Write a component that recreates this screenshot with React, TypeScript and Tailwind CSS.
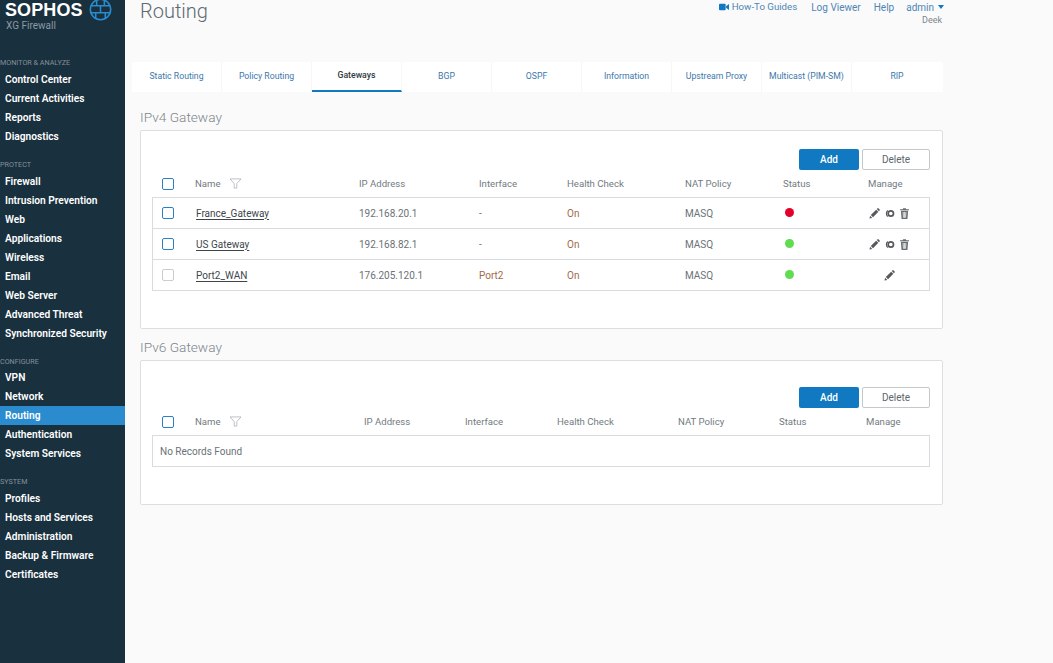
import { Fragment, type ReactNode } from "react";

const nav = [
  { label: "MONITOR & ANALYZE", items: ["Control Center", "Current Activities", "Reports", "Diagnostics"] },
  { label: "PROTECT", items: ["Firewall", "Intrusion Prevention", "Web", "Applications", "Wireless", "Email", "Web Server", "Advanced Threat", "Synchronized Security"] },
  { label: "CONFIGURE", items: ["VPN", "Network", "Routing", "Authentication", "System Services"] },
  { label: "SYSTEM", items: ["Profiles", "Hosts and Services", "Administration", "Backup & Firmware", "Certificates"] },
];

const tabs = ["Static Routing", "Policy Routing", "Gateways", "BGP", "OSPF", "Information", "Upstream Proxy", "Multicast (PIM-SM)", "RIP"];

const gateways = [
  { name: "France_Gateway", ip: "192.168.20.1", iface: "-", status: "bg-[#e4002b]", full: true, dim: false },
  { name: "US Gateway", ip: "192.168.82.1", iface: "-", status: "bg-[#5fdc4f]", full: true, dim: false },
  { name: "Port2_WAN", ip: "176.205.120.1", iface: "Port2", status: "bg-[#5fdc4f]", full: false, dim: true },
];

const v4Cols = "grid-cols-[43px_164px_120px_88px_118px_98px_85px_62px]";
const v4RowCols = "grid-cols-[42px_164px_120px_88px_118px_98px_85px_62px]";
const v6Cols = "grid-cols-[43px_169px_101px_92px_121px_101px_87px_60px]";

function Logo() {
  return (
    <div className="h-[54px] pl-[5px] overflow-hidden">
      <div className="flex items-start">
        <span className="font-['Liberation_Sans',sans-serif] text-[18px] leading-[20px] font-bold tracking-[0.1px] text-white">SOPHOS</span>
        <svg viewBox="0 0 24 24" className="w-[23px] h-[23px] ml-[6px] mt-[-2px]" fill="none" stroke="#2a8ccf" strokeWidth="1.6">
          <circle cx="12" cy="12" r="10.6" />
          <path d="M2 8h20M1.5 15.5h21M8 1.8v6.2M16 1.8v6.2M12 8v7.5M7 15.5v6.5M17 15.5v6.5" />
        </svg>
      </div>
      <div className="text-[10px] leading-[13px] text-[#8d9aa3] -mt-[2px] pl-[1px]">XG Firewall</div>
    </div>
  );
}

function Sidebar() {
  return (
    <aside className="w-[125px] shrink-0 bg-[#19303e] overflow-hidden">
      <Logo />
      {nav.map((group, i) => (
        <Fragment key={group.label}>
          <div className={`${i === 0 ? "mt-0" : "mt-[10px]"} ${i === 2 ? "h-[15px]" : "h-[16px]"} leading-[18px] text-[7.2px] text-[#84919a] whitespace-nowrap`}>
            {group.label}
          </div>
          {group.items.map((item) => (
            <div
              key={item}
              className={`h-[19px] pl-[5px] leading-[19px] text-[10.2px] font-semibold whitespace-nowrap text-white ${item === "Routing" ? "bg-[#2a8ccf]" : ""}`}
            >
              {item}
            </div>
          ))}
        </Fragment>
      ))}
    </aside>
  );
}

function TopBar() {
  return (
    <div className="h-[62px] flex justify-between pl-[15px] pr-[109px]">
      <h1 className="text-[20px] leading-[22px] font-light text-[#5d6a73]">Routing</h1>
      <div className="flex flex-col items-end">
        <div className="flex items-center h-[14px] text-[10px] text-[#4f86b5]">
          <svg viewBox="0 0 12 9" className="w-[10px] h-[8px] mr-[3px]" fill="#1079c1">
            <rect x="0" y="0.5" width="8" height="8" rx="1.2" />
            <path d="M8.5 3.5 12 1v7L8.5 5.5z" />
          </svg>
          <span className="text-[9.7px]">How-To Guides</span>
          <span className="ml-[14px]">Log Viewer</span>
          <span className="ml-[13px]">Help</span>
          <span className="ml-[12px]">admin</span>
          <span className="ml-[4px] mb-[1px] border-x-[3.5px] border-x-transparent border-t-[4px] border-t-[#1079c1]" />
        </div>
        <div className="text-[9px] leading-[12px] pr-[2px] text-[#7c868d]">Deek</div>
      </div>
    </div>
  );
}

function Tabs() {
  return (
    <div className="ml-[7px] w-[811px] h-[30px] flex bg-white">
      {tabs.map((t) => {
        const active = t === "Gateways";
        return (
          <div
            key={t}
            className={`w-[90px] shrink-0 text-center text-[8.7px] leading-[26px] whitespace-nowrap border-r border-[#f7f7f7] last:border-r-0 ${
              active ? "font-medium text-[#2e3a42] border-b-2 border-b-[#1079c1]" : "text-[#3d78ab] pt-[1px]"
            }`}
          >
            {t}
          </div>
        );
      })}
    </div>
  );
}

function Checkbox({ dim }: { dim?: boolean }) {
  return <span className={`block w-[12px] h-[12px] rounded-[2px] border bg-white ${dim ? "border-[#c9cdd0]" : "border-[#2c7fc0]"}`} />;
}

function FilterIcon() {
  return (
    <svg viewBox="0 0 14 12" className="w-[13px] h-[11px]" fill="none" stroke="#a4abb0" strokeWidth="0.8">
      <path d="M1 1h12L8.4 6.2V11H5.6V6.2z" />
    </svg>
  );
}

function Pencil() {
  return (
    <svg viewBox="0 0 12 12" className="w-[11px] h-[11px]" fill="#55595c">
      <path d="M0.5 11.5 1.2 8.4 3.6 10.8zM2 7.6 7.8 1.8l2.4 2.4-5.8 5.8zM8.5 1.1 9.3.4c.3-.3.8-.3 1.1 0l1.2 1.2c.3.3.3.8 0 1.1l-.8.8z" />
    </svg>
  );
}

function LinkIcon() {
  return (
    <svg viewBox="0 0 12 10" className="w-[10px] h-[9px]" fill="none" stroke="#55595c">
      <circle cx="7" cy="5" r="3.2" strokeWidth="2" />
      <path d="M3.4 1.4A4.6 4.6 0 0 0 3.4 8.6" strokeWidth="1.4" />
    </svg>
  );
}

function Trash() {
  return (
    <svg viewBox="0 0 10 12" className="w-[9px] h-[11px]" fill="#6a6e70">
      <path d="M0 1.2h3L3.5.3h3l.5.9h3v1.3H0z" />
      <path fillRule="evenodd" d="M1 3h8l-.7 9H1.7zM3 4.3l.3 6.3h.8L3.9 4.3zM4.6 4.3v6.3h.8V4.3zM6.1 4.3l-.2 6.3h.8L7 4.3z" />
    </svg>
  );
}

function Actions() {
  return (
    <div className="flex justify-end mr-[12px] gap-[3px]">
      <button className="w-[60px] h-[21px] rounded-[2px] bg-[#1079c1] text-white text-[10px] font-medium">Add</button>
      <button className="w-[68px] h-[21px] rounded-[2px] bg-white border border-[#c4c8ca] text-[#5d666c] text-[10px] pb-[1px]">Delete</button>
    </div>
  );
}

function HeaderRow({ cols, labels }: { cols: string; labels: string[] }) {
  return (
    <div className={`grid ${cols} ml-[11px] mr-[13px] h-[27px] pt-[1px] items-center text-[9.6px] text-[#727b81]`}>
      <div className="pl-[10px]"><Checkbox /></div>
      <div className="flex items-center gap-[8px]">
        <span>Name</span>
        <FilterIcon />
      </div>
      {labels.map((l) => (
        <div key={l} className="whitespace-nowrap">{l}</div>
      ))}
    </div>
  );
}

function Panel({ title, pad, children }: { title: string; pad: string; children: ReactNode }) {
  return (
    <section className="ml-[15px] w-[803px]">
      <h2 className="h-[23px] text-[13.7px] leading-[20px] font-light text-[#7d868c]">{title}</h2>
      <div className={`border border-[#dcdfe0] rounded-[2px] bg-white ${pad}`}>{children}</div>
    </section>
  );
}

export default function App() {
  const labels = ["IP Address", "Interface", "Health Check", "NAT Policy", "Status", "Manage"];
  return (
    <div className="flex w-[1053px] h-[663px] overflow-hidden bg-[#fafafa] font-['Roboto',sans-serif]">
      <Sidebar />
      <main className="flex-1">
        <TopBar />
        <Tabs />
        <div className="mt-[15px]">
          <Panel title="IPv4 Gateway" pad="pt-[18px] pb-[37px]">
            <Actions />
            <HeaderRow cols={v4Cols} labels={labels} />
            <div className="ml-[11px] mr-[12px] border border-[#d9dcde]">
              {gateways.map((g) => (
                <div key={g.name} className={`grid ${v4RowCols} h-[31px] last:h-[30px] items-center text-[10px] text-[#6a7277] border-b border-[#d9dcde] last:border-b-0`}>
                  <div className="pl-[9px]"><Checkbox dim={g.dim} /></div>
                  <div className="text-[#3e464b] underline underline-offset-2 pl-[1px]">{g.name}</div>
                  <div>{g.ip}</div>
                  <div className="text-[#a06a4a]">{g.iface}</div>
                  <div className="text-[#a06a4a]">On</div>
                  <div>MASQ</div>
                  <div className="pl-[2px] pb-[2px]"><span className={`block w-[9px] h-[9px] rounded-full ${g.status}`} /></div>
                  <div className={`flex items-center gap-[5px] ${g.full ? "pl-[1px]" : "pl-[16px]"}`}>
                    <Pencil />
                    {g.full && <LinkIcon />}
                    {g.full && <Trash />}
                  </div>
                </div>
              ))}
            </div>
          </Panel>
          <div className="mt-[8px]">
            <Panel title="IPv6 Gateway" pad="pt-[26px] pb-[37px]">
              <Actions />
              <HeaderRow cols={v6Cols} labels={labels} />
              <div className="ml-[11px] mr-[12px] h-[32px] border border-[#d9dcde] pl-[7px] leading-[31px] text-[10px] text-[#6a7277]">
                No Records Found
              </div>
            </Panel>
          </div>
        </div>
      </main>
    </div>
  );
}
